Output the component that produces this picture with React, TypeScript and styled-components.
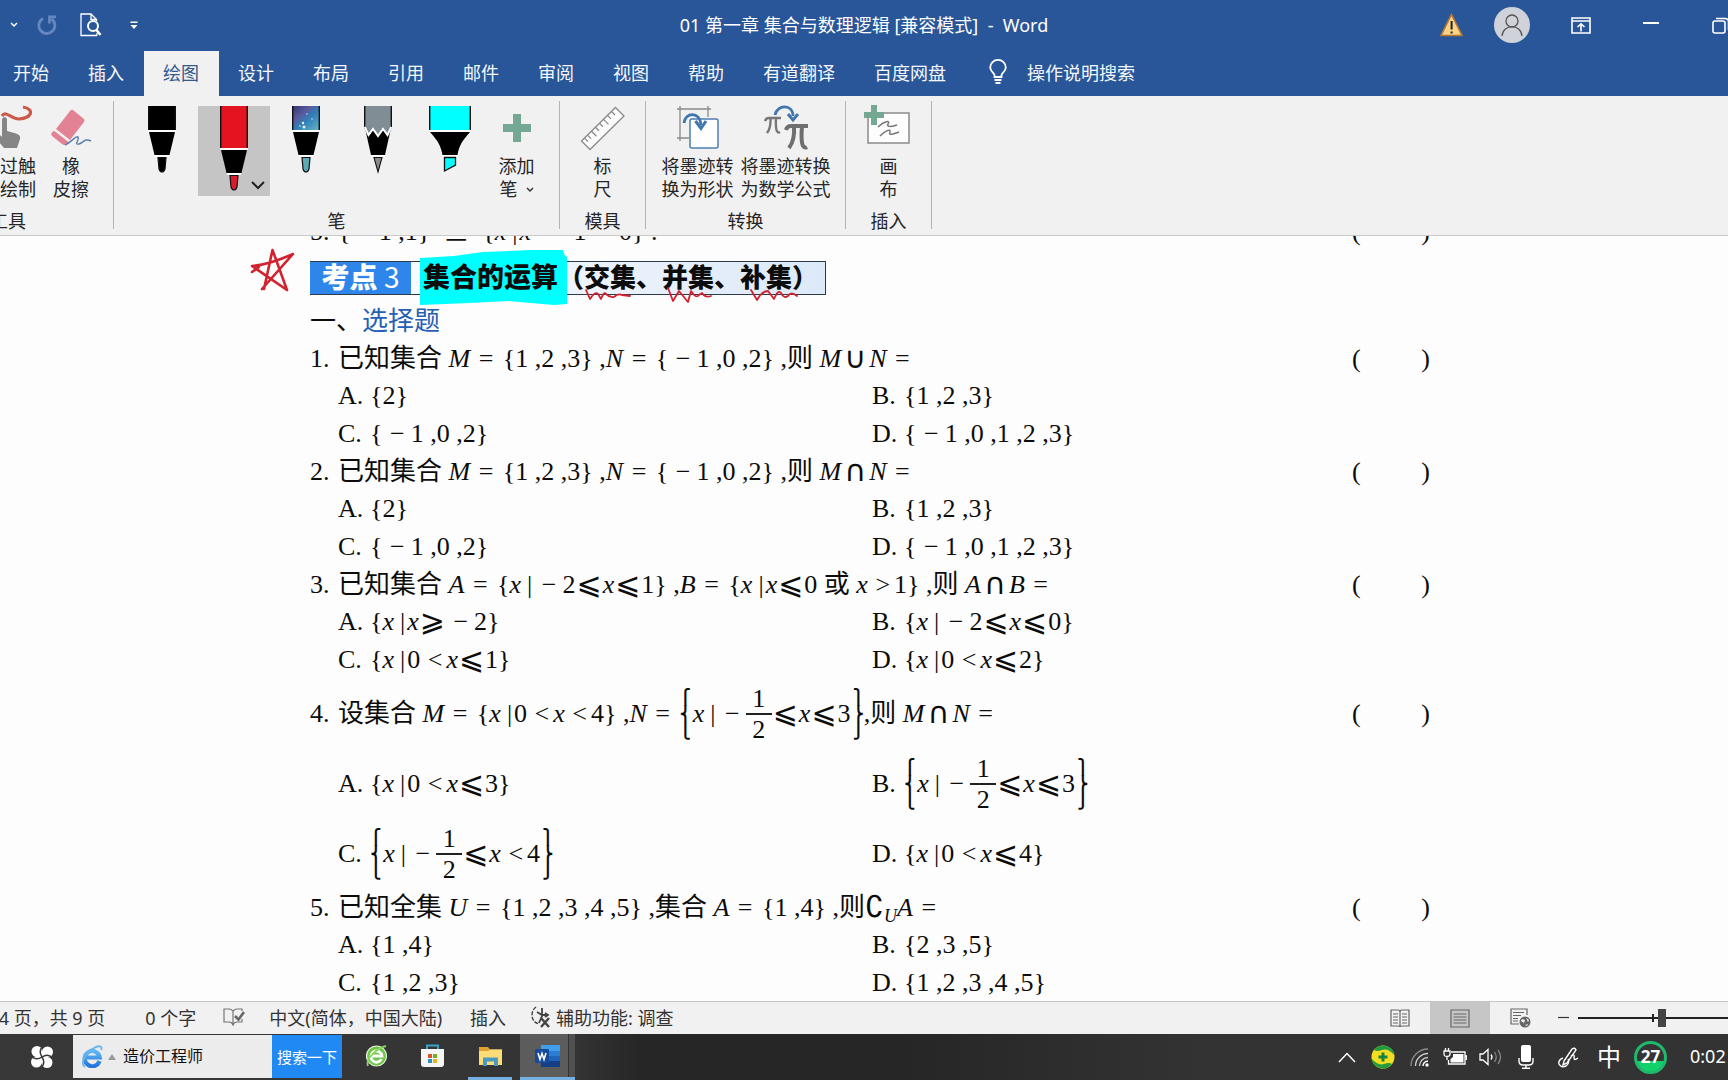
import React from "react";
import styled, { createGlobalStyle, css } from "styled-components";

const UI_FONT = `"Noto Sans", "Noto Sans CJK SC", sans-serif`;
const DOC_FONT = `"Liberation Serif", "Noto Sans CJK SC", serif`;

const GlobalStyle = createGlobalStyle`
  * { box-sizing: border-box; }
  body { margin: 0; overflow: hidden; background: #fdfdfd; }
  button { font: inherit; color: inherit; background: none; border: 0; padding: 0; margin: 0; cursor: pointer; }
  svg { display: block; flex: none; }
`;

const Window = styled.div`
  height: 100vh;
  display: flex;
  flex-direction: column;
  overflow: hidden;
  font-family: ${UI_FONT};
  font-size: 18px;
  color: #262626;
`;

/* ---------- title bar ---------- */

const TitleBar = styled.header`
  flex: none;
  height: 51px;
  display: grid;
  grid-template-columns: 1fr auto 1fr;
  background: #295698;
  color: #fff;
`;

const QuickAccess = styled.div`
  display: flex;
  align-items: center;
  height: 50px;
  padding-left: 10px;
`;

const DocTitle = styled.h1`
  margin: 0;
  font-size: 18px;
  font-weight: 400;
  line-height: 50px;
  white-space: pre;
`;

const WindowControls = styled.div`
  display: flex;
  align-items: center;
  justify-content: flex-end;
  height: 50px;
  margin-right: -4px;
`;

const IconButton = styled.button<{ $before?: number }>`
  flex: none;
  display: flex;
  align-items: center;
  margin-left: ${(p) => p.$before ?? 0}px;
`;

/* ---------- tabs ---------- */

const TabRow = styled.nav`
  flex: none;
  display: flex;
  height: 45px;
  background: #295698;
  color: #f4f8fd;
`;

const TabList = styled.div`
  display: flex;
  margin-left: -6px;
`;

const Tab = styled.button<{ $active?: boolean }>`
  height: 45px;
  padding: 0 20px 4px 19px;
  white-space: nowrap;
  ${(p) =>
    p.$active &&
    css`
      background: #f1f1f1;
      color: #33598f;
    `}
`;

const TellMe = styled.button`
  display: flex;
  align-items: center;
  gap: 20px;
  padding: 0 0 4px 23px;
  white-space: nowrap;
`;

/* ---------- ribbon ---------- */

const Ribbon = styled.section`
  flex: none;
  display: flex;
  height: 140px;
  margin-left: -97px;
  padding-top: 5px;
  background: #f1f1f1;
  border-bottom: 1px solid #c9c9c9;
`;

const Group = styled.div<{ $width: number }>`
  flex: none;
  width: ${(p) => p.$width}px;
  height: 128px;
  display: flex;
  flex-direction: column;
  justify-content: space-between;
  border-right: 1px solid #b4b4b4;
`;

const GroupBody = styled.div<{ $atEnd?: boolean }>`
  height: 104px;
  display: flex;
  justify-content: ${(p) => (p.$atEnd ? "flex-end" : "center")};
  padding-right: ${(p) => (p.$atEnd ? 12 : 0)}px;
`;

const GroupLabel = styled.div`
  height: 22px;
  line-height: 28px;
  text-align: center;
`;

const Tool = styled.button<{ $width: number }>`
  flex: none;
  width: ${(p) => p.$width}px;
  display: flex;
  flex-direction: column;
  align-items: center;
  line-height: 23px;
  white-space: nowrap;
`;

const ToolIcon = styled.span`
  height: 54px;
  display: flex;
  align-items: flex-start;
  padding-top: 4px;
`;

const ToolLine = styled.span`
  display: flex;
  align-items: center;
  gap: 8px;
`;

const PenButton = styled.button<{ $selected?: boolean }>`
  position: relative;
  flex: none;
  width: 72px;
  height: 90px;
  margin-top: 5px;
  display: flex;
  justify-content: center;
  align-items: flex-start;
  background: ${(p) => (p.$selected ? "#c5c5c5" : "transparent")};
`;

const PenMenuMark = styled.span`
  position: absolute;
  right: 5px;
  bottom: 6px;
`;

/* ---------- document ---------- */

const Page = styled.main`
  flex: 1;
  min-height: 0;
  overflow: hidden;
  padding: 0 298px 0 310px;
  background: #fdfdfd;
  font-family: ${DOC_FONT};
  font-size: 26px;
  line-height: 36px;
  color: #0c0c0c;
`;

const Line = styled.div<{ $tall?: boolean }>`
  display: flex;
  align-items: center;
  height: ${(p) => (p.$tall ? 70 : 37)}px;
  white-space: pre;
`;

const PreviousLine = styled(Line)`
  margin-top: -23px;
`;

const Number_ = styled.span`
  flex: none;
  width: 28px;
`;

const Stem = styled.span`
  flex: 1;
  display: flex;
  align-items: center;
`;

const Blank = styled.span`
  flex: none;
  width: 78px;
  display: flex;
  justify-content: space-between;
`;

const Options = styled.div`
  display: grid;
  grid-template-columns: 1fr 1fr;
  padding: 0 24px 0 28px;
`;

const Option = styled.div<{ $tall?: boolean }>`
  display: flex;
  align-items: center;
  height: ${(p) => (p.$tall ? 70 : 38)}px;
  white-space: pre;
`;

const OptionLetter = styled.span`
  flex: none;
  width: 32px;
`;

const Var = styled.i`
  font-style: italic;
`;

const Relation = styled.span`
  margin: 0 1px;
  font-family: "DejaVu Sans", sans-serif;
  font-size: 30px;
  line-height: 24px;
  vertical-align: -1px;
`;

const SetOperator = styled(Relation)`
  margin: 0 3px;
`;

const Complement = styled(Relation)`
  margin: 0;
`;

const Equals = styled.span`
  margin: 0 3px 0 2px;
`;

const Compare = styled.span`
  margin: 0 4px 0 1px;
`;

const Minus = styled.span`
  margin: 0 6px 0 1px;
`;

const Bar = styled.span`
  margin: 0 2px 0 6px;
`;

const Sub = styled.i`
  align-self: flex-end;
  font-size: 18px;
  line-height: 20px;
`;

const Fraction = styled.span`
  display: flex;
  flex-direction: column;
  align-items: center;
  width: 26px;
`;

const FractionPart = styled.span<{ $ruled?: boolean }>`
  width: 26px;
  line-height: 29px;
  text-align: center;
  border-bottom: ${(p) => (p.$ruled ? "2px solid #222" : "0")};
`;

const TallBrace = styled.span<{ $closing?: boolean }>`
  display: flex;
  flex-direction: column;
  margin: ${(p) => (p.$closing ? "0 0 0 2px" : "0 2px 0 0")};
  font-family: "DejaVu Sans", sans-serif;
  font-size: 15px;
  font-weight: 700;
  line-height: 17px;
`;

const TopicBar = styled.div`
  position: relative;
  display: flex;
  width: 516px;
  height: 34px;
  margin: 11px 0 8px;
  border: 1px solid #2c3a4c;
  background: linear-gradient(90deg, #f8fbfe 20%, #dce9f8);
  font-family: "Noto Sans CJK SC", sans-serif;
  font-weight: 900;
  font-size: 26px;
  line-height: 28px;
  white-space: nowrap;
`;

const TopicNumber = styled.span`
  position: relative;
  flex: none;
  width: 101px;
  margin: 0 12px 0 -1px;
  background: #2f86ea;
  color: #fff;
  font-size: 28px;
  text-align: center;
`;

const TopicDigit = styled.span`
  font-weight: 400;
`;

const TopicText = styled.span`
  position: relative;
`;

const TopicStrong = styled(TopicText)`
  font-size: 27px;
`;

const Ink = styled.svg`
  position: absolute;
  left: -61px;
  top: -15px;
  overflow: visible;
`;

const SectionTitle = styled.h2`
  margin: 0;
  height: 37px;
  line-height: 38px;
  font-size: 26px;
  font-weight: 400;
  white-space: pre;
`;

const Blue = styled.span`
  color: #2560b4;
`;

/* ---------- status bar ---------- */

const StatusBar = styled.footer`
  flex: none;
  display: flex;
  height: 33px;
  background: #f1f1f1;
  border-top: 1px solid #c4c4c4;
  color: #333;
`;

const StatusItem = styled.button<{ $before?: number }>`
  flex: none;
  display: flex;
  align-items: center;
  gap: 4px;
  height: 32px;
  margin-left: ${(p) => p.$before ?? 0}px;
  padding-bottom: 2px;
  white-space: pre;
`;

const StatusRight = styled.div`
  display: flex;
  align-items: center;
  margin-left: auto;
`;

const ViewButton = styled.button<{ $on?: boolean }>`
  width: 60px;
  height: 32px;
  display: flex;
  align-items: center;
  justify-content: center;
  background: ${(p) => (p.$on ? "#c6c6c6" : "transparent")};
`;

const ZoomSlider = styled.input`
  appearance: none;
  width: 150px;
  height: 18px;
  margin: 0 0 0 9px;
  background: linear-gradient(#222, #222) 0 50% / 100% 2px no-repeat,
    linear-gradient(#222, #222) 74px 50% / 2px 8px no-repeat;
  &::-webkit-slider-thumb {
    appearance: none;
    width: 8px;
    height: 18px;
    background: #444;
  }
`;

/* ---------- taskbar ---------- */

const Taskbar = styled.footer`
  flex: none;
  display: flex;
  align-items: center;
  height: 46px;
  background: linear-gradient(90deg, #383838 0, #343434 575px, #262626 640px, #262626 900px, #333 1200px);
  color: #fff;
`;

const StartButton = styled.button`
  width: 73px;
  padding-left: 31px;
`;

const SearchBox = styled.form`
  display: flex;
  align-items: center;
  height: 43px;
  margin-bottom: 1px;
  padding-left: 8px;
  background: #ececec;
`;

const SearchMark = styled.span`
  width: 0;
  margin: 0 7px 0 5px;
  border: 4px solid transparent;
  border-top: 0;
  border-bottom: 6px solid #999;
`;

const SearchInput = styled.input`
  width: 149px;
  height: 42px;
  padding: 0 0 4px;
  border: 0;
  outline: 0;
  background: transparent;
  font: 16px ${UI_FONT};
  color: #111;
`;

const SearchButton = styled.button`
  width: 70px;
  height: 43px;
  background: #2189f3;
  color: #fff;
  font-size: 15px;
  white-space: nowrap;
`;

const TaskButton = styled.button<{ $before: number; $open?: boolean; $active?: boolean }>`
  flex: none;
  width: 44px;
  height: 46px;
  margin-left: ${(p) => p.$before}px;
  display: flex;
  align-items: center;
  justify-content: center;
  border-bottom: 3px solid ${(p) => (p.$open ? "#76b0e0" : "transparent")};
  ${(p) =>
    p.$active &&
    css`
      width: 55px;
      background: linear-gradient(90deg, #5c5c5c 48px, #333 48px, #333 49px, #505050 49px);
    `}
`;

const Tray = styled.div`
  display: flex;
  align-items: center;
  margin-left: auto;
  height: 46px;
`;

const Ime = styled.button`
  margin-left: 18px;
  font-size: 24px;
  line-height: 40px;
`;

const Temperature = styled.button`
  width: 33px;
  height: 33px;
  margin-left: 13px;
  border: 3px solid #1fb96c;
  border-radius: 50%;
  background: linear-gradient(#353535 64%, #12d06a 64%);
  font-size: 17px;
  font-weight: 700;
  line-height: 26px;
`;

const Clock = styled.time`
  width: 38px;
  margin: 0 0 2px 23px;
  font-size: 18px;
`;

/* ---------- drawings ---------- */

const Chevron = ({ w = 8, color = "#fff", stroke = 1.5 }: { w?: number; color?: string; stroke?: number }) => (
  <svg width={w} height={w / 2 + 2} viewBox={`0 0 ${w} ${w / 2 + 2}`} fill="none" stroke={color} strokeWidth={stroke}>
    <path d={`M1 1 L${w / 2} ${w / 2} L${w - 1} 1`} />
  </svg>
);

const Redo = () => (
  <svg width="20" height="22" viewBox="0 0 20 22" fill="none" stroke="#6487bd" strokeWidth="2.8">
    <path d="M6 4.5 A8 8 0 1 0 14.5 5" />
    <path d="M12.5 9.5 V2.8 H19" />
  </svg>
);

const Preview = () => (
  <svg width="22" height="24" viewBox="0 0 22 24" fill="none" stroke="#fff" strokeWidth="1.3">
    <path d="M17 22.500 H1 V1 H11 L16.500 6.500 V8 M17 20 V22.500" />
    <path d="M11 1 V6.500 H16.500" />
    <circle cx="13" cy="13" r="5" strokeWidth="2" />
    <path d="M16.500 17 L20.500 22" strokeWidth="2.6" />
  </svg>
);

const Customize = () => (
  <svg width="8" height="9" viewBox="0 0 8 9" fill="#fff">
    <path d="M0.5 0.5 H7.5 V2 H0.5Z M0.5 4 H7.5 L4 8Z" />
  </svg>
);

const Warning = () => (
  <svg width="23" height="24" viewBox="0 0 23 24">
    <path d="M11.5 1.5 L22 22.5 H1 Z" fill="#fbd387" stroke="#b9772f" strokeWidth="1.6" />
    <path d="M10.6 8 H12.6 V16.5 H10.6Z M10.6 18.5 H12.6 V20.5 H10.6Z" fill="#222" />
  </svg>
);

const Avatar = () => (
  <svg width="36" height="36" viewBox="0 0 36 36">
    <circle cx="18" cy="18" r="18" fill="#cfd2d8" />
    <g fill="none" stroke="#555" strokeWidth="1.3">
      <circle cx="18" cy="14" r="6" />
      <path d="M8 29 C9 16.500 27 16.500 28 29" />
    </g>
  </svg>
);

const RibbonDisplay = () => (
  <svg width="20" height="17" viewBox="0 0 20 17" fill="none" stroke="#fff" strokeWidth="1.6">
    <path d="M1 1 H19 V16 H1Z M1 4 H19" />
    <path d="M10 14.500 V7 M6.500 10 L10 6.800 L13.500 10" />
  </svg>
);

const Restore = () => (
  <svg width="20" height="17" viewBox="0 0 20 17" fill="none" stroke="#fff" strokeWidth="1.6">
    <rect x="1" y="4" width="12" height="12" rx="2" />
    <path d="M4 1.500 H13 Q16.500 1.500 16.500 5 V13" />
  </svg>
);

const Bulb = () => (
  <svg width="18" height="25" viewBox="0 0 18 25" fill="none" stroke="#fff" strokeWidth="1.8">
    <path d="M5.500 18 V16 C5.500 14 1.200 12.500 1.200 8.500 A7.800 7.600 0 0 1 16.800 8.500 C16.800 12.500 12.500 14 12.500 16 V18 Z" />
    <path d="M5.500 21 H12.500 M6.500 24 H11.500" />
  </svg>
);

const TouchDraw = () => (
  <svg width="46" height="44" viewBox="0 0 46 44">
    <path d="M16 11 C20 5 25 14 33 14 C46 13 49 4 37 2" fill="none" stroke="#cb5a49" strokeWidth="3.2" />
    <path d="M16 14 Q18.500 10 21 14 V26 L30 28.500 Q35 30 34 34 L31 43 H18 L8 31 Q9 27 13 29 L16 32Z" fill="#858585" />
  </svg>
);

const Eraser = () => (
  <svg width="42" height="44" viewBox="0 0 42 44">
    <path d="M23 5 L34 14 Q35 16 34 17 L20 35 L6 24 L20 6 Q21.500 4 23 5Z" fill="#e38294" />
    <path d="M4.500 26 L18.500 37 L16 39.500 Q14 40.500 12 39 L2 31 Q0.500 29 2 27Z" fill="#e38294" />
    <path d="M15 40 C22 37 26 30 28 32 C30 35 23 40 29 39 C34 37 35 33 41 36" fill="none" stroke="#5a7fa8" strokeWidth="1.400" />
  </svg>
);

const Plus = () => (
  <svg width="28" height="44" viewBox="0 0 28 44">
    <path d="M10 9 H18 V19 H28 V27 H18 V37 H10 V27 H0 V19 H10Z" fill="#74a892" />
  </svg>
);

const Ruler = () => (
  <svg width="46" height="46" viewBox="0 0 46 46" fill="#fcfcfc" stroke="#8a8a8a" strokeWidth="1.300">
    <path d="M35.500 2.500 L44 11 L10 44.500 L1.500 36 Z" />
    <path d="M31.500 6.500 l3.500 3.500 M27.500 10.400 l3.500 3.500 M23.500 14.400 l5 5 M19.500 18.300 l3.500 3.500 M15.500 22.200 l3.500 3.500 M11.500 26.200 l5 5 M7.500 30.100 l3.500 3.500 M4.500 33.100 l3.500 3.500" fill="none" />
  </svg>
);

const InkToShape = () => (
  <svg width="42" height="44" viewBox="0 0 42 44" fill="none">
    <path d="M0 4 H34 M3 1 V36 M31 1 V12 M0 33 H12" stroke="#8a8a8a" strokeWidth="1.300" />
    <rect x="13" y="14" width="28" height="29" rx="2" fill="#fff" stroke="#4d7db0" strokeWidth="1.500" />
    <path d="M7 18 C8 7 23 6 24 20" stroke="#4176ac" strokeWidth="2.800" />
    <path d="M18.500 16 L24 23.500 L29 16" stroke="#4176ac" strokeWidth="3" />
  </svg>
);

const InkToMath = () => (
  <svg width="44" height="46" viewBox="0 0 44 46" fill="none">
    <path d="M1 16 Q2 13 5 13 H17 M6.500 13 Q7 23 3 28 M12 13 Q11 30 16 27" stroke="#777" strokeWidth="2.400" />
    <path d="M22 25 Q23 21 27 21 H44 M30 21 Q31 35 25 43 M38 21 Q36 46 43 42" stroke="#6f6f6f" strokeWidth="4" />
    <path d="M11 10 C13 -1 29 -1 29 11" stroke="#4176ac" strokeWidth="2.800" />
    <path d="M24 9 L29 15 L34 9" stroke="#4176ac" strokeWidth="3" />
  </svg>
);

const CanvasIcon = () => (
  <svg width="50" height="44" viewBox="1 0 50 44" fill="none">
    <rect x="5" y="8" width="41" height="30" fill="#fdfdfd" stroke="#8a8a8a" strokeWidth="1.500" />
    <path d="M8 0 H14 V7 H21 V13 H14 V20 H8 V13 H1 V7 H8Z" fill="#74a892" />
    <path d="M15 22 C21 16 28 15 25 19 C23 22 29 22 34 20 M17 31 C22 26 28 23 27 27 C25 31 31 29 36 27" stroke="#777" strokeWidth="1.500" />
  </svg>
);

const Pen = ({ body, tip, tall }: { body: string; tip: string; tall?: boolean }) => {
  const d = tall ? 18 : 0;
  return (
    <svg width="28" height="90" viewBox="0 0 28 90">
      <rect x="0" y="0" width="28" height={24 + d} fill={body} />
      <path d={`M.7 0 V${24 + d} M27.300 0 V${24 + d}`} stroke="#111" strokeWidth="1.400" />
      <g transform={`translate(0 ${d})`}>
        <path d="M0 24 H28 V26 H0Z M7 49 H21 V51 H7Z" fill="#fff" />
        <path d="M1 26 H27 L21.500 49 H6.500 Z" fill="#000" />
        <path d="M10 51.500 H18 L17 63 Q16 66 14 66 Q12 66 11 63 Z" fill={tip} stroke="#111" strokeWidth="1.200" />
      </g>
    </svg>
  );
};

const GalaxyPen = () => (
  <svg width="28" height="90" viewBox="0 0 28 90">
    <defs>
      <linearGradient id="galaxy" x1="0" y1="0" x2="1" y2="1">
        <stop offset="0" stopColor="#31346f" />
        <stop offset=".35" stopColor="#5a5aa0" />
        <stop offset=".55" stopColor="#2f7fb8" />
        <stop offset="1" stopColor="#67b5c4" />
      </linearGradient>
    </defs>
    <rect width="28" height="24" fill="url(#galaxy)" />
    <path d="M.7 0 V24 M27.300 0 V24" stroke="#111" strokeWidth="1.400" />
    <g fill="#e8f2ff">
      <circle cx="11" cy="17" r="1.200" />
      <circle cx="12" cy="21" r="1.500" />
      <circle cx="8" cy="20" r=".8" />
      <circle cx="15" cy="8" r=".7" />
      <circle cx="20" cy="13" r=".7" />
    </g>
    <path d="M0 24 H28 V26 H0Z M7 49 H21 V51 H7Z" fill="#fff" />
    <path d="M1 26 H27 L21.500 49 H6.500 Z" fill="#000" />
    <path d="M10 51.500 H18 L17 63 Q16 66 14 66 Q12 66 11 63 Z" fill="#5fa9b5" stroke="#111" strokeWidth="1.200" />
  </svg>
);

const Pencil = () => (
  <svg width="28" height="90" viewBox="0 0 28 90">
    <path d="M0 0 H28 V22 L24 30 L19 23 L14 30 L9 23 L4 30 L0 22Z" fill="#818d94" />
    <path d="M.7 0 V22 M27.300 0 V22" stroke="#111" strokeWidth="1.400" />
    <path d="M1 22 L4.500 30 L9 23 L14 30 L19 23 L23.500 30 L27 22 L21 49 H7Z" fill="#000" />
    <path d="M.7 21 L4.500 29 L9 23 L14 30 L19 23 L23.500 29 L27.300 21" fill="none" stroke="#fff" strokeWidth="2" />
    <path d="M7 49 H21 V51 H7Z" fill="#fff" />
    <path d="M10 51.500 H18 L14 66 Z" fill="#8b8b8b" stroke="#111" strokeWidth="1.100" />
  </svg>
);

const Highlighter = () => (
  <svg width="42" height="90" viewBox="0 0 42 90">
    <rect width="42" height="24" fill="#0ff" />
    <path d="M.7 0 V24 M41.300 0 V24" stroke="#111" strokeWidth="1.400" />
    <path d="M0 24 H42 V26 H0Z M13 49 H29 V51 H13Z" fill="#fff" />
    <path d="M1 26 H41 C33 35 30 40 28.500 49 H13.500 C12 40 9 35 1 26Z" fill="#000" />
    <path d="M15.500 51.500 H26.500 V59 L15.500 65 Z" fill="#0ff" stroke="#111" strokeWidth="1.300" />
  </svg>
);

const Proof = () => (
  <svg width="22" height="18" viewBox="0 0 22 18" fill="none" stroke="#777" strokeWidth="1.200">
    <path d="M10 3 Q8 1 6 1 H1 V14 H6 Q9 14 10 17 Q11 14 14 14 H19 V11 M10 3 Q12 1 14 1 H19 V3 M10 3 V16" />
    <path d="M12 8 L15.500 11.500 L21 4" strokeWidth="2.600" stroke="#666" />
  </svg>
);

const Access = () => (
  <svg width="21" height="22" viewBox="0 0 21 22" fill="none" stroke="#444" strokeWidth="1.400">
    <path d="M5 1 Q1 4 1 9 Q1 16 8 18" strokeDasharray="4 1.500" />
    <path d="M11 2 V10 L8 17 M6 6 L11 9 L17 9 M14 7 L17 9 L14 11" strokeWidth="1.800" />
    <path d="M10 12 L18 21 M18 12 L10 21" strokeWidth="2.400" />
  </svg>
);

const ReadMode = () => (
  <svg width="20" height="19" viewBox="0 0 20 19" fill="none" stroke="#666" strokeWidth="1.200">
    <path d="M1 1 H8 Q10 1 10 3 Q10 1 12 1 H19 V17 H12 Q10 17 10 18 Q10 17 8 17 H1Z M10 3 V18" />
    <path d="M3 5 H8 M3 8 H8 M3 11 H8 M3 14 H8 M12 5 H17 M12 8 H17 M12 11 H17 M12 14 H17" />
  </svg>
);

const PrintMode = () => (
  <svg width="20" height="19" viewBox="0 0 20 19" fill="none" stroke="#666" strokeWidth="1.200">
    <path d="M1 1 H19 V18 H1Z M3.500 5 H16.500 M3.500 8 H16.500 M3.500 11 H16.500 M3.500 14 H16.500" />
  </svg>
);

const WebMode = () => (
  <svg width="21" height="20" viewBox="0 0 21 20" fill="none" stroke="#666" strokeWidth="1.200">
    <path d="M17 7 V1 H1 V16 H9 M3 4.500 H14 M3 7.500 H11 M3 10.500 H8 M3 13 H8" />
    <circle cx="15" cy="14" r="5.500" fill="#666" stroke="none" />
    <path d="M12 11 L15 12 L14 15 L11 13Z M16 10 L19 12 L18 14Z M15 17 L18 16 L17 18Z" fill="#f1f1f1" stroke="none" />
  </svg>
);

const Swirl = () => (
  <svg width="22" height="22" viewBox="0 0 22 22">
    <g fill="#fff">
      <circle cx="6" cy="5.500" r="5.500" />
      <circle cx="16.500" cy="6" r="5.500" />
      <circle cx="5.500" cy="16" r="5.500" />
      <circle cx="16" cy="16.500" r="5.500" />
      <rect x="5" y="5" width="12" height="12" />
    </g>
    <g fill="none" stroke="#383838" strokeWidth="1.500">
      <path d="M12 0 Q7 5 11 11" />
      <path d="M22 12 Q17 7 11 11" />
      <path d="M10 22 Q15 17 11 11" />
      <path d="M0 10 Q5 15 11 11" />
    </g>
  </svg>
);

const Browser = () => (
  <svg width="22" height="23" viewBox="0 0 22 23" fill="none">
    <defs>
      <linearGradient id="browser" x1="0" y1="0" x2="0" y2="1">
        <stop offset="0" stopColor="#62b8f5" />
        <stop offset="1" stopColor="#2377dc" />
      </linearGradient>
    </defs>
    <path d="M18.500 16 A7.600 7.600 0 1 1 18.800 12.500 H6" stroke="url(#browser)" strokeWidth="4.200" />
    <path d="M4 22 C-2 19 5 7 13 3 C18 0 22 1 20 5" stroke="#6ab4ef" strokeWidth="1.800" />
  </svg>
);

const GreenBrowser = () => (
  <svg width="23" height="24" viewBox="0 0 23 24" fill="none">
    <circle cx="11.500" cy="12" r="10" fill="#6fc548" stroke="#e6f5dc" strokeWidth="1.200" />
    <path d="M16.500 15 A5.600 5.600 0 1 1 17 12 H7" stroke="#fff" strokeWidth="2.800" />
    <path d="M3 22 C0 15 12 4 21 2" stroke="#8ad35c" strokeWidth="1.800" />
  </svg>
);

const Store = () => (
  <svg width="23" height="24" viewBox="0 0 23 24">
    <path d="M6 6 V1.500 H17 V6" fill="none" stroke="#39a5c6" strokeWidth="2" />
    <path d="M0 5 H23 V20 Q23 23 20 23 H3 Q0 23 0 20Z" fill="#f5f5f5" />
    <path d="M7 10 h4 v4 h-4z" fill="#d9532b" />
    <path d="M12 10 h4 v4 h-4z" fill="#7cab28" />
    <path d="M7 15 h4 v4 h-4z" fill="#2a92c4" />
    <path d="M12 15 h4 v4 h-4z" fill="#e6b51e" />
  </svg>
);

const Folder = () => (
  <svg width="23" height="20" viewBox="0 0 23 20">
    <path d="M0 1 H9 L11 3.500 H23 V18 H0Z" fill="#e0a032" />
    <path d="M0 5 H9 L11 3.500 H23 V19 H0Z" fill="#fbdc77" />
    <path d="M4 20 V11.500 H19 V20 H15 V15.500 H8 V20Z" fill="#4a9ac0" />
  </svg>
);

const WordLogo = () => (
  <svg width="25" height="24" viewBox="0 0 25 24">
    <rect x="6" y="1" width="19" height="22" rx="1.500" fill="#1f62b9" />
    <rect x="6" y="1" width="19" height="6" fill="#3f9fe8" />
    <rect x="6" y="7" width="19" height="5" fill="#2b7cd3" />
    <rect x="6" y="17" width="19" height="6" fill="#123f85" />
    <rect x="0" y="5" width="14" height="14" rx="1.200" fill="#174a9c" />
    <path d="M3 9 L5 15.500 L7 9.500 L9 15.500 L11 9" fill="none" stroke="#fff" strokeWidth="1.600" />
  </svg>
);

const TrayUp = () => (
  <svg width="18" height="11" viewBox="0 0 18 11" fill="none" stroke="#fff" strokeWidth="1.500">
    <path d="M1 10 L9 1.500 L17 10" />
  </svg>
);

const Shield = () => (
  <svg width="24" height="24" viewBox="0 0 24 24">
    <circle cx="12" cy="12" r="11.500" fill="#f5de22" />
    <path d="M3 5 Q8 -1.500 17 1.500 Q23 4.500 23 10 Q17 3 11 5 Q6 7 3 5Z" fill="#239b3e" />
    <path d="M21 19 Q16 25.500 7 22.500 Q1 19.500 1 14 Q7 21 13 19 Q18 17 21 19Z" fill="#239b3e" />
    <path d="M12 7.500 V16.500 M7.500 12 H16.500" stroke="#16843a" strokeWidth="3" />
  </svg>
);

const Wifi = () => (
  <svg width="19" height="19" viewBox="0 0 19 19" fill="none" strokeWidth="1.400">
    <path d="M1 18 A17 17 0 0 1 18 1" stroke="#8a8a8a" />
    <path d="M5.500 18 A12.500 12.500 0 0 1 18 5.500 M9.500 18 A8.500 8.500 0 0 1 18 9.500" stroke="#ccc" />
    <path d="M13 18 A5 5 0 0 1 18 13" stroke="#fff" />
    <circle cx="17" cy="17" r="1.700" fill="#fff" />
  </svg>
);

const Battery = () => (
  <svg width="24" height="18" viewBox="0 0 24 18" fill="none" stroke="#fff" strokeWidth="1.300">
    <path d="M8 4 H22 V16 H5.500 V12 M22.500 8 H23.500 V12" />
    <path d="M10 6 H20.500 V14.500 H7.500 V11 L10 9Z" fill="#fff" stroke="none" />
    <path d="M1 3 H7 V6 Q7 8.500 4 8.500 Q1 8.500 1 6Z M2.500 3 V0 M5.500 3 V0 M4 8 V12" />
  </svg>
);

const Speaker = () => (
  <svg width="23" height="18" viewBox="0 0 23 18" fill="none" stroke="#fff" strokeWidth="1.300">
    <path d="M1 6 H4 L9 1.500 V16.500 L4 12 H1Z M12 6.500 Q14 9 12 11.500" />
    <path d="M15.500 4 Q19 9 15.500 14 M19 2 Q24 9 19 16" stroke="#858585" />
  </svg>
);

const Mic = () => (
  <svg width="16" height="24" viewBox="0 0 16 24" fill="none" stroke="#fff" strokeWidth="1.400">
    <rect x="3" y="0" width="10" height="17" rx="2" fill="#fff" stroke="none" />
    <path d="M1 13 V16 Q1 20 5 20 H11 Q15 20 15 16 V13 M8 20 V23.300 M4 23.300 H12" />
  </svg>
);

const InkPen = () => (
  <svg width="21" height="21" viewBox="0 0 21 21" fill="none" stroke="#fff" strokeWidth="1.400">
    <path d="M6 14 L14 2 Q17 0 18 3 L9 16 L5 18Z" />
    <path d="M5 11 Q0 13 1 17 Q3 21 8 19 Q12 16 10 12 M13 9 Q17 6 16 11 Q16 14 20 11" />
  </svg>
);

const InkMarks = () => (
  <Ink width="600" height="60" viewBox="0 0 600 60" fill="none" stroke="#d3222f" strokeLinejoin="round" strokeLinecap="round">
    <path
      d="M170 11 L204 9 L233 5 L281 3 L313 3 L315 9 L317 10 L317 57 L304 58 L258 54 L220 56 L170 58 Z"
      fill="#0ff"
      stroke="none"
    />
    <path d="M14 42 L22.500 3 L37 43 L2 19 Q18 18 43 7 L12 42 M2 25 L9 20" strokeWidth="2.600" />
  </Ink>
);

const InkWaves = () => (
  <Ink width="600" height="60" viewBox="0 0 600 60" fill="none" stroke="#d3222f" strokeWidth="1.800" strokeLinejoin="round" strokeLinecap="round">
    <path d="M336 43 L340 52 Q345 44 348 47 L351 52 Q354 44 356 47 Q360 51 364 50 Q368 46 372 48 L380 49" />
    <path d="M418 41 L423 54 L429 44 L438 55 L441 44 Q446 52 449 48 L452 46 Q455 51 461 49" />
    <path d="M501 43 L507 53 Q512 44 518 44 L524 52 Q528 42 531 46 Q534 52 538 49 Q541 44 547 49" />
  </Ink>
);

/* ---------- mathematical text ---------- */

/** Sets single letters in italics and gives each operator its own spacing. */
const Formula = ({ children }: { children: string }) => (
  <span>
    {children.split(/([A-Zx⩽⩾∪∩∁<>|−=])/).map((part, i) => {
      if (/^[A-Zx]$/.test(part)) return <Var key={i}>{part}</Var>;
      if (/^[⩽⩾]$/.test(part)) return <Relation key={i}>{part}</Relation>;
      if (/^[∪∩]$/.test(part)) return <SetOperator key={i}>{part}</SetOperator>;
      if (/^[<>]$/.test(part)) return <Compare key={i}>{part}</Compare>;
      if (part === "∁") return <Complement key={i}>{part}</Complement>;
      if (part === "=") return <Equals key={i}>{part}</Equals>;
      if (part === "|") return <Bar key={i}>{part}</Bar>;
      if (part === "−") return <Minus key={i}>{part}</Minus>;
      return part;
    })}
  </span>
);

const LeftBrace = () => (
  <TallBrace>
    <span>⎧</span>
    <span>⎨</span>
    <span>⎩</span>
  </TallBrace>
);

const RightBrace = () => (
  <TallBrace $closing>
    <span>⎫</span>
    <span>⎬</span>
    <span>⎭</span>
  </TallBrace>
);

const HalfSet = ({ rest }: { rest: string }) => (
  <>
    <LeftBrace />
    <Formula>{"x| −"}</Formula>
    <Fraction>
      <FractionPart $ruled>1</FractionPart>
      <FractionPart>2</FractionPart>
    </Fraction>
    <Formula>{rest}</Formula>
    <RightBrace />
  </>
);

const AnswerBlank = () => (
  <Blank>
    <span>(</span>
    <span>)</span>
  </Blank>
);

type QuestionData = {
  stem: React.ReactNode;
  options: React.ReactNode[];
  tall?: boolean;
};

const questions: QuestionData[] = [
  {
    stem: <Formula>{"已知集合 M = {1 ,2 ,3} ,N = { −1 ,0 ,2} ,则 M∪N ="}</Formula>,
    options: ["{2}", "{1 ,2 ,3}", "{ −1 ,0 ,2}", "{ −1 ,0 ,1 ,2 ,3}"],
  },
  {
    stem: <Formula>{"已知集合 M = {1 ,2 ,3} ,N = { −1 ,0 ,2} ,则 M∩N ="}</Formula>,
    options: ["{2}", "{1 ,2 ,3}", "{ −1 ,0 ,2}", "{ −1 ,0 ,1 ,2 ,3}"],
  },
  {
    stem: <Formula>{"已知集合 A = {x| −2⩽x⩽1} ,B = {x|x⩽0 或 x >1} ,则 A∩B ="}</Formula>,
    options: ["{x|x⩾ −2}", "{x| −2⩽x⩽0}", "{x|0 <x⩽1}", "{x|0 <x⩽2}"],
  },
  {
    tall: true,
    stem: (
      <>
        <Formula>{"设集合 M = {x|0 <x <4} ,N = "}</Formula>
        <HalfSet rest="⩽x⩽3" />
        <Formula>{",则 M∩N ="}</Formula>
      </>
    ),
    options: ["{x|0 <x⩽3}", <HalfSet rest="⩽x⩽3" />, <HalfSet rest="⩽x <4" />, "{x|0 <x⩽4}"],
  },
  {
    stem: (
      <>
        <Formula>{"已知全集 U = {1 ,2 ,3 ,4 ,5} ,集合 A = {1 ,4} ,则∁"}</Formula>
        <Sub>U</Sub>
        <Formula>{"A ="}</Formula>
      </>
    ),
    options: ["{1 ,4}", "{2 ,3 ,5}", "{1 ,2 ,3}", "{1 ,2 ,3 ,4 ,5}"],
  },
];

const Question = ({ index, data }: { index: number; data: QuestionData }) => (
  <section>
    <Line $tall={data.tall}>
      <Number_>{index}.</Number_>
      <Stem>{data.stem}</Stem>
      <AnswerBlank />
    </Line>
    <Options>
      {data.options.map((option, i) => (
        <Option key={i} $tall={data.tall}>
          <OptionLetter>{"ABCD"[i]}.</OptionLetter>
          {typeof option === "string" ? <Formula>{option}</Formula> : option}
        </Option>
      ))}
    </Options>
  </section>
);

const tabs = ["开始", "插入", "绘图", "设计", "布局", "引用", "邮件", "审阅", "视图", "帮助", "有道翻译", "百度网盘"];

export default function App() {
  return (
    <Window>
      <GlobalStyle />
      <TitleBar>
        <QuickAccess>
          <IconButton aria-label="撤消选项"><Chevron /></IconButton>
          <IconButton aria-label="重复" $before={19}><Redo /></IconButton>
          <IconButton aria-label="打印预览" $before={23}><Preview /></IconButton>
          <IconButton aria-label="自定义快速访问工具栏" $before={28}><Customize /></IconButton>
        </QuickAccess>
        <DocTitle>{"01 第一章 集合与数理逻辑 [兼容模式]  -  Word"}</DocTitle>
        <WindowControls>
          <IconButton aria-label="警告"><Warning /></IconButton>
          <IconButton aria-label="账户" $before={31}><Avatar /></IconButton>
          <IconButton aria-label="功能区显示选项" $before={41}><RibbonDisplay /></IconButton>
          <IconButton aria-label="最小化" $before={52}>
            <svg width="16" height="10" viewBox="0 0 16 10"><path d="M0 3 H16" stroke="#fff" strokeWidth="2" /></svg>
          </IconButton>
          <IconButton aria-label="还原" $before={53}><Restore /></IconButton>
        </WindowControls>
      </TitleBar>

      <TabRow>
        <TabList>
          {tabs.map((name) => (
            <Tab key={name} $active={name === "绘图"}>{name}</Tab>
          ))}
        </TabList>
        <TellMe><Bulb />操作说明搜索</TellMe>
      </TabRow>

      <Ribbon>
        <Group $width={211}>
          <GroupBody $atEnd>
            <Tool $width={64}>
              <ToolIcon><TouchDraw /></ToolIcon>
              <ToolLine>通过触</ToolLine>
              <ToolLine>摸绘制</ToolLine>
            </Tool>
            <Tool $width={60}>
              <ToolIcon><Eraser /></ToolIcon>
              <ToolLine>橡</ToolLine>
              <ToolLine>皮擦</ToolLine>
            </Tool>
          </GroupBody>
          <GroupLabel>工具</GroupLabel>
        </Group>
        <Group $width={446}>
          <GroupBody>
            <PenButton aria-label="黑色笔"><Pen body="#000" tip="#000" /></PenButton>
            <PenButton aria-label="红色笔" $selected>
              <Pen body="#e3131f" tip="#dc1c2c" tall />
              <PenMenuMark><Chevron w={14} color="#222" stroke={2} /></PenMenuMark>
            </PenButton>
            <PenButton aria-label="银河笔"><GalaxyPen /></PenButton>
            <PenButton aria-label="铅笔"><Pencil /></PenButton>
            <PenButton aria-label="荧光笔"><Highlighter /></PenButton>
            <Tool $width={62}>
              <ToolIcon><Plus /></ToolIcon>
              <ToolLine>添加</ToolLine>
              <ToolLine>笔 <Chevron color="#333" /></ToolLine>
            </Tool>
          </GroupBody>
          <GroupLabel>笔</GroupLabel>
        </Group>
        <Group $width={86}>
          <GroupBody>
            <Tool $width={60}>
              <ToolIcon><Ruler /></ToolIcon>
              <ToolLine>标</ToolLine>
              <ToolLine>尺</ToolLine>
            </Tool>
          </GroupBody>
          <GroupLabel>模具</GroupLabel>
        </Group>
        <Group $width={200}>
          <GroupBody>
            <Tool $width={80}>
              <ToolIcon><InkToShape /></ToolIcon>
              <ToolLine>将墨迹转</ToolLine>
              <ToolLine>换为形状</ToolLine>
            </Tool>
            <Tool $width={96}>
              <ToolIcon><InkToMath /></ToolIcon>
              <ToolLine>将墨迹转换</ToolLine>
              <ToolLine>为数学公式</ToolLine>
            </Tool>
          </GroupBody>
          <GroupLabel>转换</GroupLabel>
        </Group>
        <Group $width={86}>
          <GroupBody>
            <Tool $width={60}>
              <ToolIcon><CanvasIcon /></ToolIcon>
              <ToolLine>画</ToolLine>
              <ToolLine>布</ToolLine>
            </Tool>
          </GroupBody>
          <GroupLabel>插入</GroupLabel>
        </Group>
      </Ribbon>

      <Page>
        <PreviousLine>
          <Number_>5.</Number_>
          <Stem><Formula>{"{ −1 ,1}  ⊆  {x|x²  −1 = 0} ."}</Formula></Stem>
          <AnswerBlank />
        </PreviousLine>
        <TopicBar>
          <InkMarks />
          <TopicNumber>考点 <TopicDigit>3</TopicDigit></TopicNumber>
          <TopicStrong>集合的运算</TopicStrong>
          <TopicText>（交集、并集、补集）</TopicText>
          <InkWaves />
        </TopicBar>
        <SectionTitle>一、<Blue>选择题</Blue></SectionTitle>
        {questions.map((q, i) => (
          <Question key={i} index={i + 1} data={q} />
        ))}
      </Page>

      <StatusBar>
        <StatusItem $before={-24}>第 4 页，共 9 页</StatusItem>
        <StatusItem $before={40}>0 个字</StatusItem>
        <StatusItem $before={27} aria-label="校对"><Proof /></StatusItem>
        <StatusItem $before={24}>中文(简体，中国大陆)</StatusItem>
        <StatusItem $before={28}>插入</StatusItem>
        <StatusItem $before={25}><Access />辅助功能: 调查</StatusItem>
        <StatusRight>
          <ViewButton aria-label="阅读视图"><ReadMode /></ViewButton>
          <ViewButton aria-label="页面视图" $on><PrintMode /></ViewButton>
          <ViewButton aria-label="Web 版式视图"><WebMode /></ViewButton>
          <IconButton aria-label="缩小" $before={8}>
            <svg width="11" height="18" viewBox="0 0 11 18"><path d="M0 8.500 H11" stroke="#333" strokeWidth="1.200" /></svg>
          </IconButton>
          <ZoomSlider type="range" aria-label="缩放" min={0} max={100} defaultValue={56} />
        </StatusRight>
      </StatusBar>

      <Taskbar>
        <StartButton aria-label="开始"><Swirl /></StartButton>
        <SearchBox onSubmit={(e) => e.preventDefault()}>
          <Browser />
          <SearchMark />
          <SearchInput aria-label="搜索" defaultValue="造价工程师" />
          <SearchButton>搜索一下</SearchButton>
        </SearchBox>
        <TaskButton aria-label="浏览器" $before={12}><GreenBrowser /></TaskButton>
        <TaskButton aria-label="应用商店" $before={12}><Store /></TaskButton>
        <TaskButton aria-label="文件资源管理器" $before={14} $open><Folder /></TaskButton>
        <TaskButton aria-label="Word" $before={8} $open $active><WordLogo /></TaskButton>
        <Tray>
          <IconButton aria-label="显示隐藏的图标"><TrayUp /></IconButton>
          <IconButton aria-label="安全卫士" $before={15}><Shield /></IconButton>
          <IconButton aria-label="网络" $before={15}><Wifi /></IconButton>
          <IconButton aria-label="电池" $before={14}><Battery /></IconButton>
          <IconButton aria-label="音量" $before={12}><Speaker /></IconButton>
          <IconButton aria-label="麦克风" $before={16}><Mic /></IconButton>
          <IconButton aria-label="手写" $before={24}><InkPen /></IconButton>
          <Ime>中</Ime>
          <Temperature>27</Temperature>
          <Clock>0:02</Clock>
        </Tray>
      </Taskbar>
    </Window>
  );
}
